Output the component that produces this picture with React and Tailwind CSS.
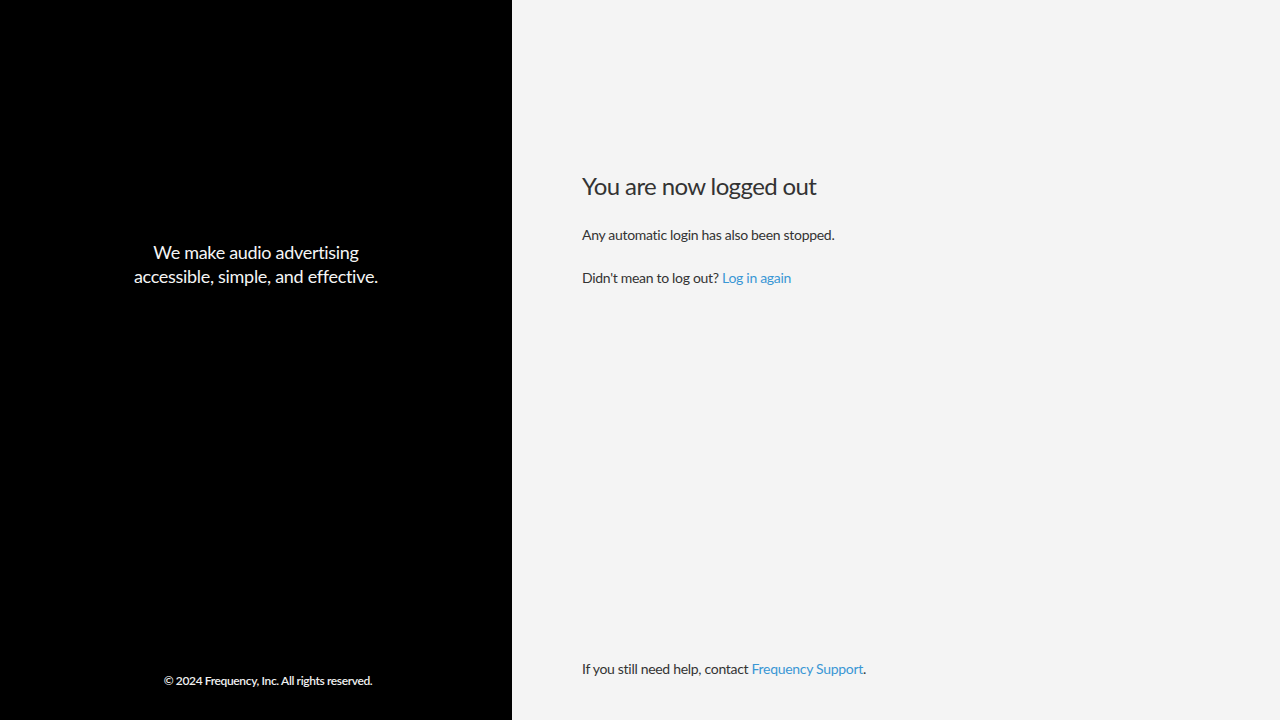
export default function App() {
  const font = { fontFamily: '"Source Sans Pro", Lato, "Liberation Sans", sans-serif' };
  return (
    <div className="flex w-full h-[720px]" style={font}>
      <div className="w-[512px] h-full bg-black flex flex-col text-white">
        <div className="flex-1 flex items-start justify-center pt-[240px]">
          <p className="text-[18px] leading-[24px] text-center text-[#f5f5f5] tracking-[-0.3px]">
            We make audio advertising
            <br />
            accessible, simple, and effective.
          </p>
        </div>
        <div className="pb-[31px] pl-[24px] text-center text-[12px] font-semibold leading-[16px] text-[#f0f0f0] tracking-[-0.37px]">
          © 2024 Frequency, Inc. All rights reserved.
        </div>
      </div>
      <div className="flex-1 h-full bg-[#f4f4f4] flex flex-col pl-[70px] text-[#333333]">
        <div className="flex-1 pt-[170px]">
          <h1 className="text-[24px] leading-[32px] font-normal tracking-[-0.6px]">You are now logged out</h1>
          <p className="mt-[23px] text-[14px] leading-[20px] tracking-[-0.3px]">Any automatic login has also been stopped.</p>
          <p className="mt-[23px] text-[14px] leading-[20px] tracking-[-0.3px]">
            Didn't mean to log out? <a className="text-[#3a97d4]">Log in again</a>
          </p>
        </div>
        <p className="pb-[41px] text-[14px] leading-[20px] tracking-[-0.3px]">
          If you still need help, contact <a className="text-[#3a97d4]">Frequency Support</a>.
        </p>
      </div>
    </div>
  );
}
